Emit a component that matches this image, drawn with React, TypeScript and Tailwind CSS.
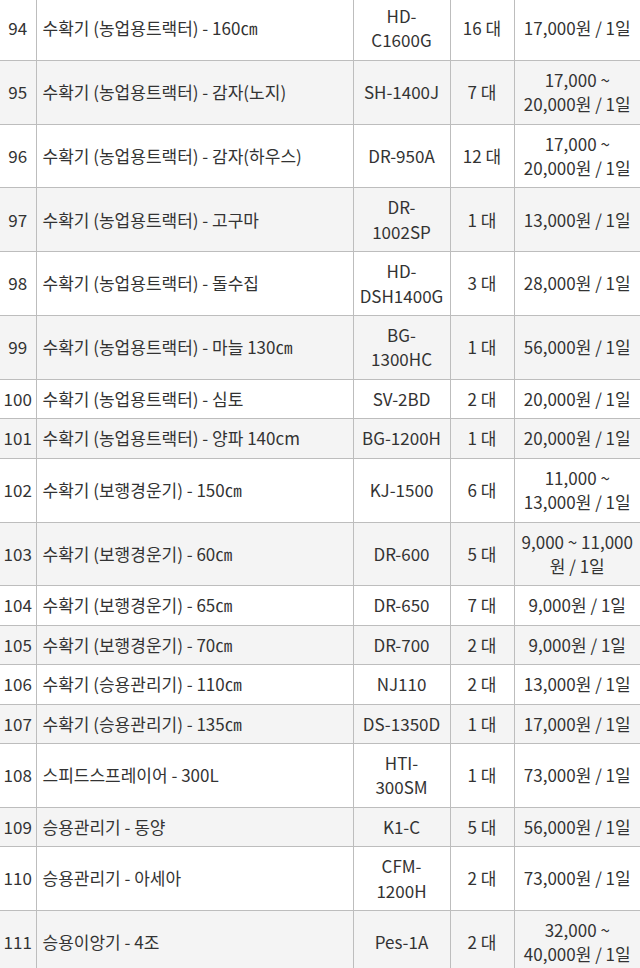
import React from 'react';

interface Equipment {
  no: number;
  name: string;
  model: string;
  count: string;
  price: string;
}

const rows: Equipment[] = [
  { no: 94, name: '수확기 (농업용트랙터) - 160㎝', model: 'HD-C1600G', count: '16 대', price: '17,000원 / 1일' },
  { no: 95, name: '수확기 (농업용트랙터) - 감자(노지)', model: 'SH-1400J', count: '7 대', price: '17,000 ~ 20,000원 / 1일' },
  { no: 96, name: '수확기 (농업용트랙터) - 감자(하우스)', model: 'DR-950A', count: '12 대', price: '17,000 ~ 20,000원 / 1일' },
  { no: 97, name: '수확기 (농업용트랙터) - 고구마', model: 'DR-1002SP', count: '1 대', price: '13,000원 / 1일' },
  { no: 98, name: '수확기 (농업용트랙터) - 돌수집', model: 'HD-DSH1400G', count: '3 대', price: '28,000원 / 1일' },
  { no: 99, name: '수확기 (농업용트랙터) - 마늘 130㎝', model: 'BG-1300HC', count: '1 대', price: '56,000원 / 1일' },
  { no: 100, name: '수확기 (농업용트랙터) - 심토', model: 'SV-2BD', count: '2 대', price: '20,000원 / 1일' },
  { no: 101, name: '수확기 (농업용트랙터) - 양파 140cm', model: 'BG-1200H', count: '1 대', price: '20,000원 / 1일' },
  { no: 102, name: '수확기 (보행경운기) - 150㎝', model: 'KJ-1500', count: '6 대', price: '11,000 ~ 13,000원 / 1일' },
  { no: 103, name: '수확기 (보행경운기) - 60㎝', model: 'DR-600', count: '5 대', price: '9,000 ~ 11,000원 / 1일' },
  { no: 104, name: '수확기 (보행경운기) - 65㎝', model: 'DR-650', count: '7 대', price: '9,000원 / 1일' },
  { no: 105, name: '수확기 (보행경운기) - 70㎝', model: 'DR-700', count: '2 대', price: '9,000원 / 1일' },
  { no: 106, name: '수확기 (승용관리기) - 110㎝', model: 'NJ110', count: '2 대', price: '13,000원 / 1일' },
  { no: 107, name: '수확기 (승용관리기) - 135㎝', model: 'DS-1350D', count: '1 대', price: '17,000원 / 1일' },
  { no: 108, name: '스피드스프레이어 - 300L', model: 'HTI-300SM', count: '1 대', price: '73,000원 / 1일' },
  { no: 109, name: '승용관리기 - 동양', model: 'K1-C', count: '5 대', price: '56,000원 / 1일' },
  { no: 110, name: '승용관리기 - 아세아', model: 'CFM-1200H', count: '2 대', price: '73,000원 / 1일' },
  { no: 111, name: '승용이앙기 - 4조', model: 'Pes-1A', count: '2 대', price: '32,000 ~ 40,000원 / 1일' },
];

const App: React.FC = () => {
  return (
    <div className="w-[640px] h-[968px] overflow-hidden bg-white">
      <table
        className="table-fixed border-collapse w-[640px] -mt-[4px] text-[17px] leading-[24.4px] text-[#333]"
        style={{ fontFamily: '"Noto Sans CJK KR", "Noto Sans", sans-serif' }}
      >
        <colgroup>
          <col className="w-[36px]" />
          <col className="w-[317px]" />
          <col className="w-[97px]" />
          <col className="w-[64px]" />
          <col className="w-[126px]" />
        </colgroup>
        <tbody>
          {rows.map((row, i) => (
            <tr key={row.no} className={i % 2 === 1 ? 'bg-[#f4f4f4]' : 'bg-white'}>
              <td className="border-y border-r border-[#bdbdbd] text-center px-0 py-[7px]">{row.no}</td>
              <td className="border border-[#bdbdbd] text-left px-[6px] py-[7px]">{row.name}</td>
              <td className="border border-[#bdbdbd] text-center px-[6px] py-[7px]">{row.model}</td>
              <td className="border border-[#bdbdbd] text-center px-[6px] py-[7px]">{row.count}</td>
              <td className="border-y border-l border-[#bdbdbd] text-center px-[6px] py-[7px]">{row.price}</td>
            </tr>
          ))}
        </tbody>
      </table>
    </div>
  );
};

export default App;
